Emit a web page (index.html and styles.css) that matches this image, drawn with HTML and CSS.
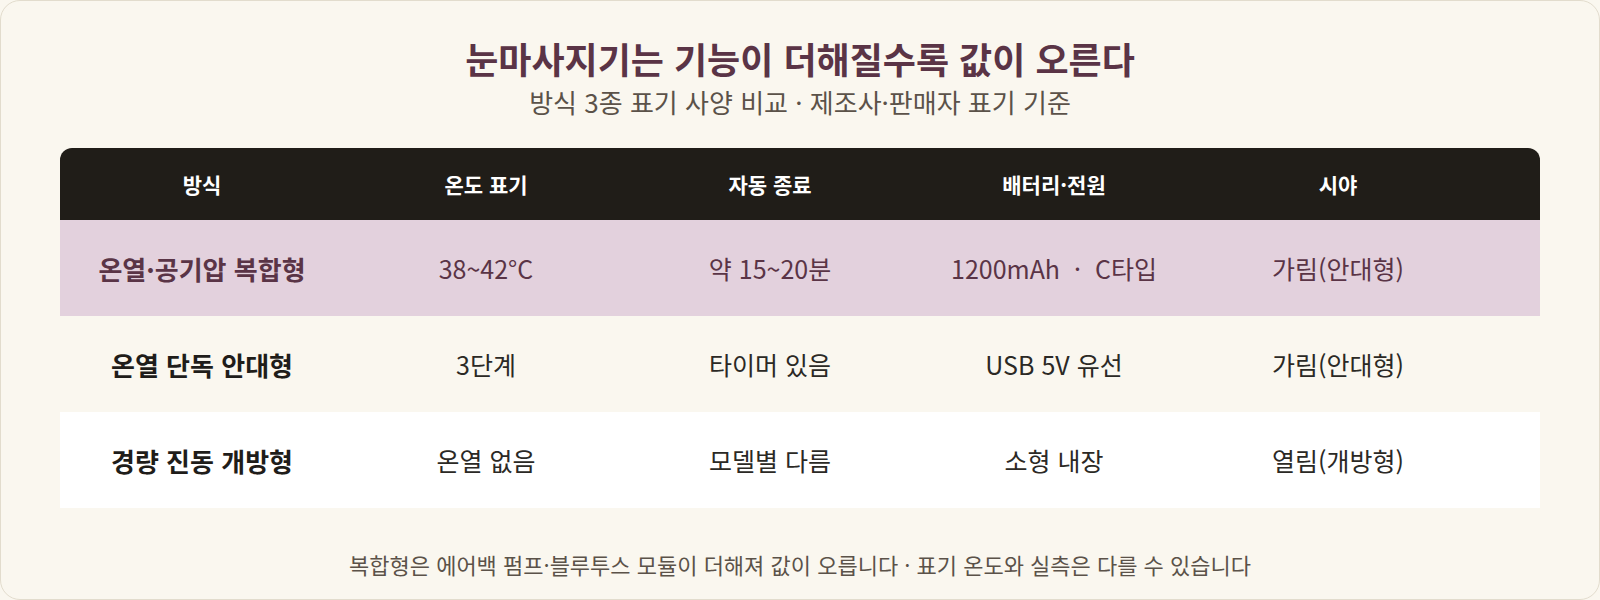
FILE: index.html
```html
<!DOCTYPE html>
<html lang="ko">
<head>
<meta charset="utf-8">
<link rel="stylesheet" href="styles.css">
</head>
<body>
<div class="card">
  <header class="head">
    <h1 class="title">눈마사지기는 기능이 더해질수록 값이 오른다</h1>
    <p class="subtitle">방식 3종 표기 사양 비교 · 제조사·판매자 표기 기준</p>
  </header>
  <div class="table">
    <div class="row row-head">
      <div class="cell">방식</div>
      <div class="cell">온도 표기</div>
      <div class="cell">자동 종료</div>
      <div class="cell">배터리·전원</div>
      <div class="cell">시야</div>
    </div>
    <div class="row row-hl">
      <div class="cell name">온열·공기압 복합형</div>
      <div class="cell">38~42°C</div>
      <div class="cell">약 15~20분</div>
      <div class="cell">1200mAh &nbsp;·&nbsp; C타입</div>
      <div class="cell">가림(안대형)</div>
    </div>
    <div class="row row-plain">
      <div class="cell name">온열 단독 안대형</div>
      <div class="cell">3단계</div>
      <div class="cell">타이머 있음</div>
      <div class="cell">USB 5V 유선</div>
      <div class="cell">가림(안대형)</div>
    </div>
    <div class="row row-white">
      <div class="cell name">경량 진동 개방형</div>
      <div class="cell">온열 없음</div>
      <div class="cell">모델별 다름</div>
      <div class="cell">소형 내장</div>
      <div class="cell">열림(개방형)</div>
    </div>
  </div>
  <p class="note">복합형은 에어백 펌프·블루투스 모듈이 더해져 값이 오릅니다 · 표기 온도와 실측은 다를 수 있습니다</p>
</div>
</body>
</html>
```
FILE: styles.css
```css
* { box-sizing: border-box; }
html, body { margin: 0; padding: 0; }
body {
  width: 1600px;
  height: 600px;
  font-family: "Noto Sans CJK KR", "Noto Sans", sans-serif;
  background: #faf7ef;
}
.card {
  width: 1600px;
  height: 600px;
  border: 1px solid #e2dccd;
  border-radius: 20px;
  background: #faf7ef;
  padding: 27px 59px 0;
  display: flex;
  flex-direction: column;
}
.head {
  text-align: center;
}
.title {
  margin: 0;
  font-size: 36px;
  font-weight: 700;
  line-height: 60px;
  color: #5a3446;
}
.subtitle {
  margin: 0;
  font-size: 26px;
  line-height: 28px;
  color: #5b5249;
}
.table {
  margin-top: 32px;
}
.row {
  display: grid;
  grid-template-columns: repeat(5, 1fr);
  padding-right: 60px;
  align-items: center;
  height: 96px;
}
.cell {
  text-align: center;
  font-size: 25px;
  color: #2b2925;
}
.row-head {
  height: 72px;
  background: #201d18;
  border-radius: 12px 12px 0 0;
}
.row-head .cell {
  color: #ffffff;
  font-size: 21px;
  font-weight: 700;
}
.row-hl { background: #e3d1dd; }
.row-hl .cell { color: #5a3446; }
.row-plain { background: #faf7ef; }
.row-white { background: #ffffff; }
.name { font-weight: 700; font-size: 26px; color: #1f1d1a; }
.note {
  margin: 40px 0 0;
  text-align: center;
  font-size: 22px;
  line-height: 32px;
  color: #5b5249;
}
```
